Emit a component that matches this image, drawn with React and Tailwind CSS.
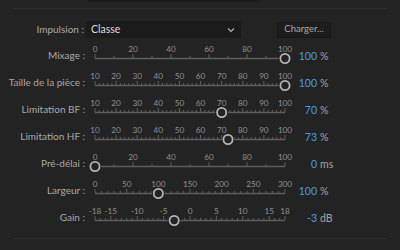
import React from 'react';

const FONT = { fontFamily: 'Lato, "Noto Sans", sans-serif' };

const X0 = 10;
const X1 = 200;

function range(min, max, step) {
    const out = [];
    for (let v = min; v <= max + 1e-9; v += step) out.push(Math.round(v * 100) / 100);
    return out;
}

const sliders = [
    { label: 'Mixage :', min: 0, max: 100, minor: 10, labels: range(0, 100, 20), value: 100, shown: '100', unit: '%' },
    { label: 'Taille de la pièce :', min: 10, max: 100, minor: 2, labels: range(10, 100, 10), value: 100, shown: '100', unit: '%' },
    { label: 'Limitation BF :', min: 10, max: 100, minor: 2, labels: range(10, 100, 10), value: 70, shown: '70', unit: '%' },
    { label: 'Limitation HF :', min: 10, max: 100, minor: 2, labels: range(10, 100, 10), value: 73, shown: '73', unit: '%' },
    { label: 'Pré-délai :', min: 0, max: 100, minor: 10, labels: range(0, 100, 20), value: 0, shown: '0', unit: 'ms' },
    { label: 'Largeur :', min: 0, max: 300, minor: 10, labels: range(0, 300, 50), value: 100, shown: '100', unit: '%' },
    { label: 'Gain :', min: -18, max: 18, minor: 1, labels: [-18, -15, -10, -5, 0, 5, 10, 15, 18], value: -3, shown: '-3', unit: 'dB' },
];

function Scale({ s }) {
    const pos = v => X0 + ((v - s.min) / (s.max - s.min)) * (X1 - X0);
    const ticks = range(s.min, s.max, s.minor);
    const trackY = 16;
    return (
        <svg width="210" height="27" className="block shrink-0">
            {s.labels.map(v => (
                <text key={'l' + v} x={pos(v)} y="10" textAnchor="middle" fontSize="8.2" fill="#909090" style={FONT}>
                    {v}
                </text>
            ))}
            {ticks.map(v => {
                const major = s.labels.includes(v);
                const h = major ? 4 : 2;
                return <line key={'t' + v} x1={pos(v)} x2={pos(v)} y1={trackY - h} y2={trackY} stroke="#5e5e5e" strokeWidth="1" />;
            })}
            <line x1={X0} x2={X1} y1={trackY + 0.5} y2={trackY + 0.5} stroke="#5e5e5e" strokeWidth="1.5" />
            <circle cx={pos(s.value)} cy={trackY + 0.5} r="6.5" fill="#232323" />
            <circle cx={pos(s.value)} cy={trackY + 0.5} r="4.6" fill="#232323" stroke="#b4b4b4" strokeWidth="1.8" />
        </svg>
    );
}

export default function App() {
    return (
        <div className="w-[400px] h-[250px] bg-[#232323] overflow-hidden px-[13px] text-[10px]" style={FONT}>
            <div className="ml-[75px] w-[172px] h-[2px] bg-[#1c1c1c]" />
            <div className="mt-[6px] h-px bg-[#2c2c2c]" />

            {/* impulsion */}
            <div className="mt-[12px] h-[17px] flex items-center">
                <span className="w-[71px] flex justify-end text-[#a9a9a9] whitespace-nowrap">Impulsion :</span>
                <div className="ml-[2px] w-[155px] h-[17px] bg-[#1b1b1b] flex items-center justify-between px-[5px]">
                    <span className="text-[#dcdcdc] text-[10.5px]">Classe</span>
                    <svg width="8" height="6" className="mr-[1px]">
                        <path d="M1 1.5 L4 4.5 L7 1.5" fill="none" stroke="#b0b0b0" strokeWidth="1.2" />
                    </svg>
                </div>
                <div className="ml-[36px] w-[54px] h-[16px] bg-[#1d1d1d] border border-[#181818] flex items-center justify-center text-[#a8a8a8] text-[9.5px]">
                    Charger...
                </div>
            </div>

            {/* sliders */}
            <div className="mt-[4px]">
                {sliders.map(s => (
                    <div key={s.label} className="h-[27px] flex items-start">
                        <span className="w-[72px] shrink-0 flex justify-end text-[#a9a9a9] pt-[6px] leading-[14px] whitespace-nowrap">{s.label}</span>
                        <Scale s={s} />
                        <div className="pt-[7px] leading-[14px] flex whitespace-nowrap text-[10.5px]">
                            <span className="w-[22px] text-right text-[#4c9ae4]">{s.shown}</span>
                            <span className="ml-[3px] text-[#a4a4a4]">{s.unit}</span>
                        </div>
                    </div>
                ))}
            </div>

            <div className="mt-[7px] h-px bg-[#2c2c2c]" />
        </div>
    );
}
